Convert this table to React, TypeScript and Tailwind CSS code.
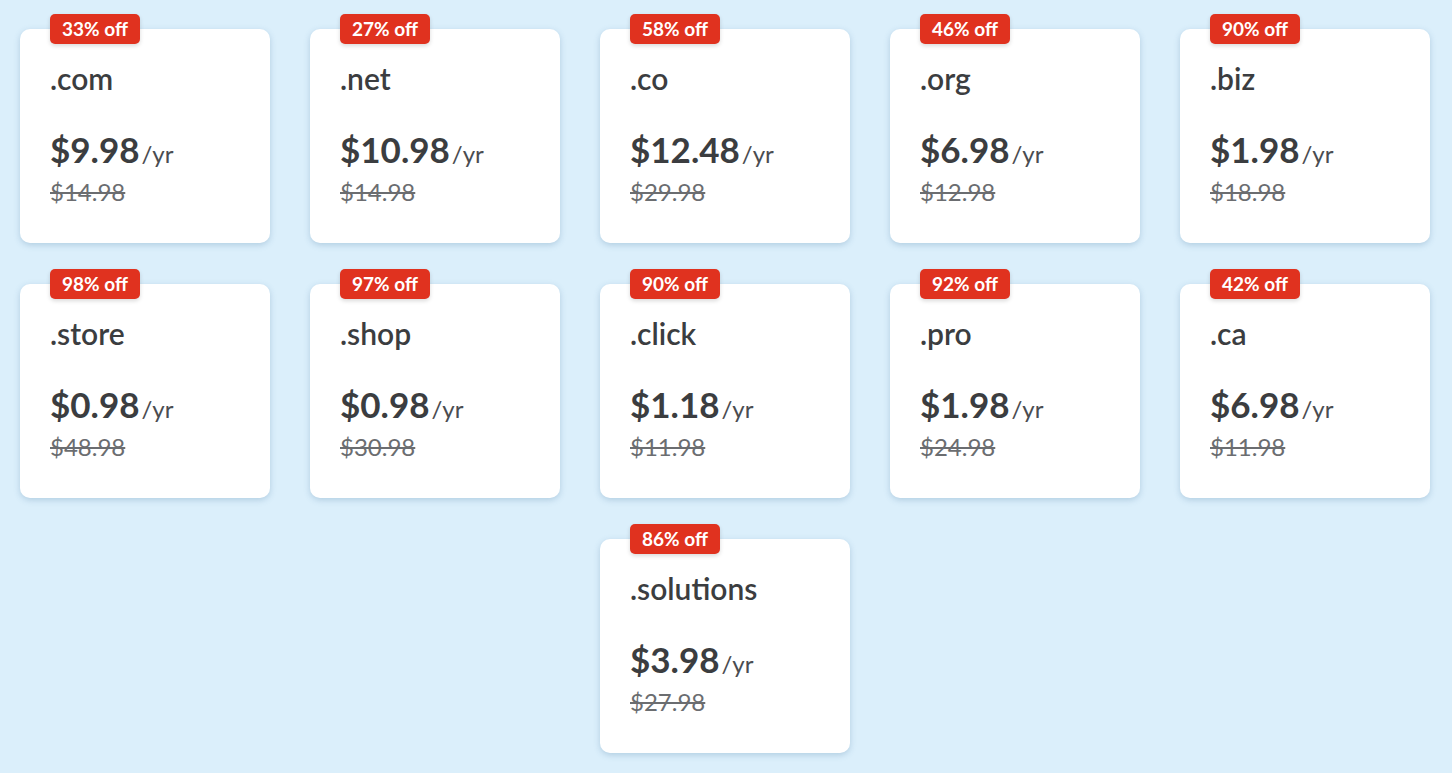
import React from "react";

const domains = [
  { tld: ".com", price: "$9.98", old: "$14.98", off: "33% off" },
  { tld: ".net", price: "$10.98", old: "$14.98", off: "27% off" },
  { tld: ".co", price: "$12.48", old: "$29.98", off: "58% off" },
  { tld: ".org", price: "$6.98", old: "$12.98", off: "46% off" },
  { tld: ".biz", price: "$1.98", old: "$18.98", off: "90% off" },
  { tld: ".store", price: "$0.98", old: "$48.98", off: "98% off" },
  { tld: ".shop", price: "$0.98", old: "$30.98", off: "97% off" },
  { tld: ".click", price: "$1.18", old: "$11.98", off: "90% off" },
  { tld: ".pro", price: "$1.98", old: "$24.98", off: "92% off" },
  { tld: ".ca", price: "$6.98", old: "$11.98", off: "42% off" },
  { tld: ".solutions", price: "$3.98", old: "$27.98", off: "86% off", center: true },
];

const DomainCard = ({ item }: any) => {
  return (
    <div
      className={`relative h-[214px] rounded-[10px] bg-white pl-[30px] pt-[32px] shadow-[0_2px_6px_rgba(70,120,160,0.28)] ${
        item.center ? "col-start-3" : ""
      }`}
    >
      <span className="absolute left-[30px] top-[-15px] flex h-[30px] w-[90px] items-center justify-center rounded-[5px] bg-[#e0321f] text-[19px] font-bold text-white shadow-[0_2px_4px_rgba(0,0,0,0.15)]">
        {item.off}
      </span>
      <p className="text-[30px] font-semibold leading-[34px] text-[#3b3d40]">
        {item.tld}
      </p>
      <p className="mt-[34px] leading-[40px] text-[#3b3d40]">
        <span className="text-[35px] font-bold">{item.price}</span>
        <span className="ml-[2px] text-[24px] text-[#4a4c50]">/yr</span>
      </p>
      <p className="mt-[1px] text-[24px] leading-[28px] text-[#6b6d70] line-through decoration-[2px]">
        {item.old}
      </p>
    </div>
  );
};

export default function App() {
  return (
    <div
      className="min-h-[773px] bg-[#dbeffb] pl-[20px] pt-[29px]"
      style={{ fontFamily: "Lato, 'Open Sans', sans-serif" }}
    >
      <div className="grid w-[1410px] grid-cols-5 gap-x-[40px] gap-y-[41px]">
        {domains.map((item, i) => (
          <DomainCard key={i} item={item} />
        ))}
      </div>
    </div>
  );
}
